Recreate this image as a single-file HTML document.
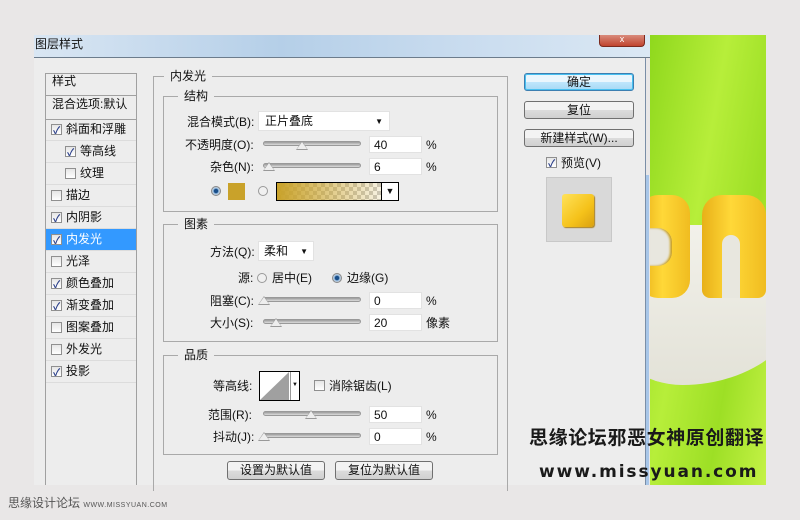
<!DOCTYPE html>
<html><head><meta charset="utf-8"><style>
*{margin:0;padding:0;box-sizing:border-box}
body{width:800px;height:520px;background:#e9e7e7;position:relative;overflow:hidden;font-family:"Liberation Sans","Noto Sans CJK SC",sans-serif;font-size:12px;color:#111}
.a{position:absolute}
.t{position:absolute;white-space:nowrap;line-height:14px}
.box{position:absolute;border:1px solid #a9a9a9}
.leg{position:absolute;background:#ededed;padding:0 6px;line-height:14px;top:-8px;left:14px}
.cb{position:absolute;width:11px;height:11px;border:1px solid #8f8f8f;background:linear-gradient(#e6e6e6,#fff)}
.cb.on::after{content:"✓";position:absolute;left:1px;top:-3px;font-size:10px;color:#2a3f8a;font-weight:bold}
.sl{position:absolute;height:5px;border-radius:3px;background:linear-gradient(#9a9a9a,#dcdcdc);border:1px solid #999}
.th{position:absolute;width:0;height:0;border-left:6px solid transparent;border-right:6px solid transparent;border-bottom:9px solid #999}
.th::after{content:"";position:absolute;left:-5px;top:1px;border-left:5px solid transparent;border-right:5px solid transparent;border-bottom:7px solid #eee}
.in{position:absolute;background:#fff;border:1px solid #e2e2e2;height:17px;padding-left:4px;line-height:16px}
.btn{position:absolute;border:1px solid #707070;border-radius:3px;background:linear-gradient(#f3f3f3 50%,#dcdcdc 50%,#d0d0d0);text-align:center;line-height:16px}
.li{position:absolute;left:46px;width:90px;height:22px;border-bottom:1px solid #dcdcdc;line-height:20px;padding-left:20px}
.li .cb{left:5px;top:5px}
.y{position:absolute;background:linear-gradient(90deg,#e8b018,#ffd838 45%,#f0bc20);}
</style></head><body>
<div class="a" style="left:34px;top:35px;width:616px;height:23px;background:linear-gradient(90deg,#d9e6f3,#b5cfe8 40%,#c9dcef 70%,#dbe8f4);border-bottom:1px solid #6c7c8c"></div>
<div class="t" style="left:35px;top:37px;font-size:12px">图层样式</div>
<div class="a" style="left:599px;top:35px;width:46px;height:12px;background:linear-gradient(#d98b7c,#c0442e);border:1px solid #7b2a1e;border-top:none;border-radius:0 0 4px 4px;color:#fff;font-size:9px;text-align:center;line-height:8px">x</div>
<div class="a" style="left:34px;top:58px;width:612px;height:427px;background:#ededed;border-right:1px solid #7a8ea6"></div>
<div class="a" style="left:45px;top:73px;width:92px;height:412px;border:1px solid #a0a0a0;border-bottom:none;background:#ededed"></div>
<div class="t" style="left:52px;top:74px">样式</div>
<div class="a" style="left:46px;top:95px;width:90px;height:1px;background:#a0a0a0"></div>
<div class="t" style="left:52px;top:97px">混合选项:默认</div>
<div class="a" style="left:46px;top:119px;width:90px;height:1px;background:#a0a0a0"></div>
<div class="li" style="top:119px"><span class="cb on"></span>斜面和浮雕</div>
<div class="li" style="top:141px;padding-left:34px"><span class="cb on" style="left:19px"></span>等高线</div>
<div class="li" style="top:163px;padding-left:34px"><span class="cb" style="left:19px"></span>纹理</div>
<div class="li" style="top:185px"><span class="cb"></span>描边</div>
<div class="li" style="top:207px"><span class="cb on"></span>内阴影</div>
<div class="li" style="top:229px;background:#3399ff;color:#fff"><span class="cb on"></span>内发光</div>
<div class="li" style="top:251px"><span class="cb"></span>光泽</div>
<div class="li" style="top:273px"><span class="cb on"></span>颜色叠加</div>
<div class="li" style="top:295px"><span class="cb on"></span>渐变叠加</div>
<div class="li" style="top:317px"><span class="cb"></span>图案叠加</div>
<div class="li" style="top:339px"><span class="cb"></span>外发光</div>
<div class="li" style="top:361px"><span class="cb on"></span>投影</div>
<div class="box" style="left:153px;top:76px;width:355px;height:415px;border-bottom:none"><span class="leg" style="left:10px">内发光</span></div>
<div class="box" style="left:163px;top:96px;width:335px;height:116px"><span class="leg">结构</span></div>
<div class="t" style="left:187px;top:115px">混合模式(B):</div>
<div class="in" style="left:258px;top:111px;width:132px;height:20px;line-height:19px;padding-left:6px">正片叠底<span style="position:absolute;right:6px;font-size:8px">▼</span></div>
<div class="t" style="left:185px;top:138px">不透明度(O):</div>
<div class="sl" style="left:263px;top:141px;width:98px"></div><div class="th" style="left:296px;top:141px"></div>
<div class="in" style="left:369px;top:136px;width:53px">40</div><div class="t" style="left:426px;top:138px">%</div>
<div class="t" style="left:210px;top:160px">杂色(N):</div>
<div class="sl" style="left:263px;top:163px;width:98px"></div><div class="th" style="left:263px;top:162px"></div>
<div class="in" style="left:369px;top:158px;width:53px">6</div><div class="t" style="left:426px;top:160px">%</div>
<div class="a" style="left:211px;top:186px;width:10px;height:10px;border-radius:50%;background:radial-gradient(#1a4f8a 35%,#8fb7dd 45%,#ddd 80%);border:1px solid #888"></div>
<div class="a" style="left:228px;top:183px;width:17px;height:17px;background:#c9a22a"></div>
<div class="a" style="left:258px;top:186px;width:10px;height:10px;border-radius:50%;background:#f0f0f0;border:1px solid #999"></div>
<div class="a" style="left:276px;top:182px;width:123px;height:19px;border:1px solid #000;background:linear-gradient(90deg,#c9a22a,rgba(201,162,42,0)),repeating-conic-gradient(#ccc 0 25%,#fff 0 50%) 0 0/8px 8px"></div>
<div class="a" style="left:381px;top:183px;width:17px;height:17px;background:#fff;border-left:1px solid #000;font-size:9px;text-align:center;line-height:17px">▼</div>
<div class="box" style="left:163px;top:224px;width:335px;height:118px"><span class="leg">图素</span></div>
<div class="t" style="left:210px;top:245px">方法(Q):</div>
<div class="in" style="left:258px;top:241px;width:56px;height:20px;line-height:19px;padding-left:5px">柔和<span style="position:absolute;right:5px;font-size:8px">▼</span></div>
<div class="t" style="left:238px;top:271px">源:</div>
<div class="a" style="left:257px;top:273px;width:10px;height:10px;border-radius:50%;background:#f0f0f0;border:1px solid #999"></div>
<div class="t" style="left:272px;top:271px">居中(E)</div>
<div class="a" style="left:332px;top:273px;width:10px;height:10px;border-radius:50%;background:radial-gradient(#1a4f8a 35%,#8fb7dd 45%,#ddd 80%);border:1px solid #888"></div>
<div class="t" style="left:347px;top:271px">边缘(G)</div>
<div class="t" style="left:210px;top:294px">阻塞(C):</div>
<div class="sl" style="left:263px;top:297px;width:98px"></div><div class="th" style="left:258px;top:296px"></div>
<div class="in" style="left:369px;top:292px;width:53px">0</div><div class="t" style="left:426px;top:294px">%</div>
<div class="t" style="left:210px;top:316px">大小(S):</div>
<div class="sl" style="left:263px;top:319px;width:98px"></div><div class="th" style="left:270px;top:318px"></div>
<div class="in" style="left:369px;top:314px;width:53px">20</div><div class="t" style="left:426px;top:316px">像素</div>
<div class="box" style="left:163px;top:355px;width:335px;height:100px"><span class="leg">品质</span></div>
<div class="t" style="left:213px;top:379px">等高线:</div>
<div class="a" style="left:259px;top:371px;width:41px;height:30px;border:1px solid #000;background:#fff"><svg width="30" height="28" style="position:absolute;left:0;top:0"><polygon points="0,28 29,0 29,28" fill="#a0a0a0"/></svg><span style="position:absolute;left:30px;top:0;width:9px;height:28px;border-left:1px solid #999;font-size:6px;line-height:26px;text-align:center">▼</span></div>
<div class="cb" style="left:314px;top:380px"></div>
<div class="t" style="left:329px;top:379px">消除锯齿(L)</div>
<div class="t" style="left:208px;top:408px">范围(R):</div>
<div class="sl" style="left:263px;top:411px;width:98px"></div><div class="th" style="left:305px;top:410px"></div>
<div class="in" style="left:369px;top:406px;width:53px">50</div><div class="t" style="left:426px;top:408px">%</div>
<div class="t" style="left:213px;top:430px">抖动(J):</div>
<div class="sl" style="left:263px;top:433px;width:98px"></div><div class="th" style="left:258px;top:432px"></div>
<div class="in" style="left:369px;top:428px;width:53px">0</div><div class="t" style="left:426px;top:430px">%</div>
<div class="btn" style="left:227px;top:461px;width:98px;height:19px">设置为默认值</div>
<div class="btn" style="left:335px;top:461px;width:98px;height:19px">复位为默认值</div>
<div class="btn" style="left:524px;top:73px;width:110px;height:18px;border-color:#3c7fb1;background:linear-gradient(#eaf6fd 50%,#bee6fd 50%,#a7d9f5);box-shadow:inset 0 0 0 1px #48c0f0">确定</div>
<div class="btn" style="left:524px;top:101px;width:110px;height:18px">复位</div>
<div class="btn" style="left:524px;top:129px;width:110px;height:18px">新建样式(W)...</div>
<div class="cb on" style="left:546px;top:157px"></div>
<div class="t" style="left:561px;top:156px">预览(V)</div>
<div class="a" style="left:546px;top:177px;width:66px;height:65px;background:#d9d9d9;border:1px solid #c8c8c8"></div>
<div class="a" style="left:562px;top:194px;width:32px;height:33px;border-radius:3px;background:linear-gradient(135deg,#ffe25a,#f5c21a 60%,#d9a010);box-shadow:1px 1px 1px #a88020"></div>
<!-- right image -->
<div class="a" style="left:650px;top:35px;width:116px;height:450px;overflow:hidden;background:linear-gradient(100deg,#8fd81d,#b7ee3a 40%,#9ddf25 70%,#c4f246)">
<div class="a" style="left:-40px;top:190px;width:200px;height:160px;background:linear-gradient(#f2f1ea,#e3e2d8);border-radius:0 0 70% 40%"></div>
<div class="y" style="left:-10px;top:160px;width:50px;height:103px;border-radius:18px"></div>
<div class="a" style="left:0;top:193px;width:22px;height:38px;background:#e8e7df;border-radius:0 14px 14px 0;box-shadow:inset -2px 0 2px #c9a020"></div>
<div class="y" style="left:52px;top:160px;width:64px;height:103px;border-radius:20px 20px 8px 8px"></div>
<div class="a" style="left:72px;top:200px;width:18px;height:63px;background:#e8e7df;border-radius:9px 9px 0 0"></div>
</div>
<div class="a" style="left:646px;top:175px;width:3px;height:310px;background:#a8c6e8"></div>
<div class="t" style="left:529px;top:428px;font-size:19px;font-weight:bold;color:#1a1a1a;letter-spacing:0.6px;line-height:22px">思缘论坛邪恶女神原创翻译</div>
<div class="t" style="left:539px;top:462px;font-size:17px;font-weight:bold;color:#1a1a1a;letter-spacing:1.9px;line-height:20px;font-family:'DejaVu Sans',sans-serif">www.missyuan.com</div>
<div class="t" style="left:8px;top:496px;font-size:12px;color:#555">思缘设计论坛 <span style="font-size:7px;letter-spacing:0.5px">WWW.MISSYUAN.COM</span></div>
</body></html>
